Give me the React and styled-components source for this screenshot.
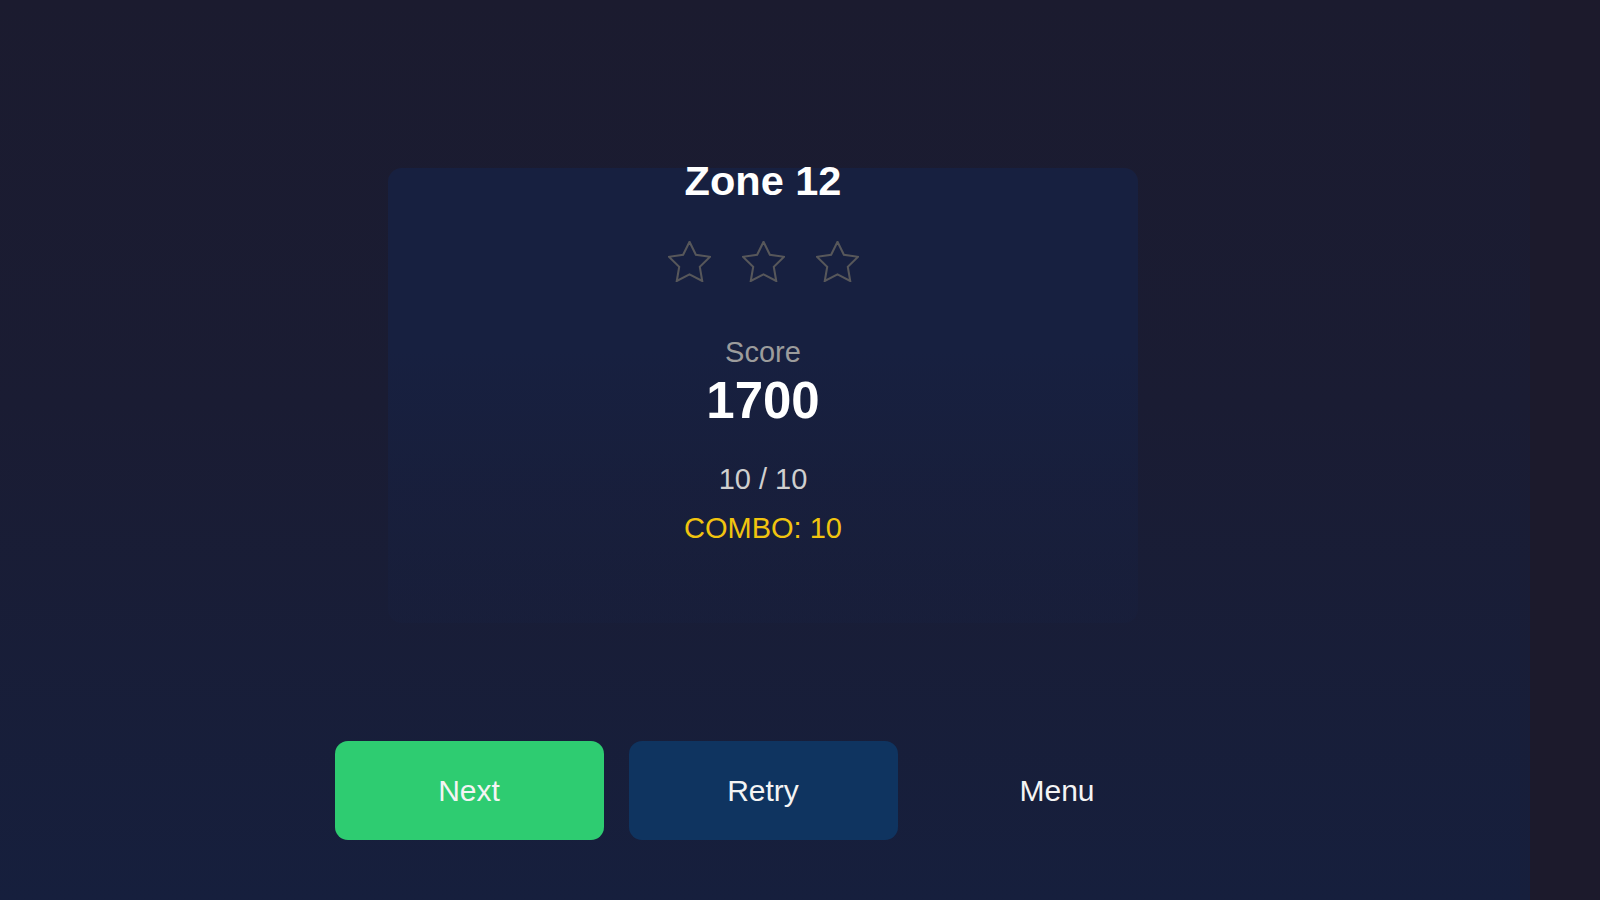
import React from "react";
import styled, { createGlobalStyle } from "styled-components";

const Global = createGlobalStyle`
  html, body { margin: 0; padding: 0; }
  body {
    background: #1c1a2c;
    font-family: "Liberation Sans", Arial, sans-serif;
    color: #f2f2f2;
  }
`;

const Shell = styled.div`
  display: flex;
  min-height: 900px;
`;

const Stage = styled.main`
  width: 1530px;
  box-sizing: border-box;
  padding-right: 4px;
  min-height: 900px;
  background: linear-gradient(180deg, #1b1b2f 0%, #1a1c33 45%, #161f3d 100%);
  display: flex;
  flex-direction: column;
  align-items: center;
`;

const Card = styled.section`
  margin-top: 168px;
  width: 750px;
  box-sizing: border-box;
  padding-bottom: 78px;
  border-radius: 14px;
  background: linear-gradient(180deg, #172040 0%, #172040 40%, rgba(23, 32, 64, 0.3) 100%);
  display: flex;
  flex-direction: column;
  align-items: center;
`;

const Title = styled.h1`
  margin: -12px 0 0;
  font-size: 41.5px;
  line-height: 1.2;
  font-weight: 700;
  color: #ffffff;
`;

const Stars = styled.div`
  margin-top: 35px;
  display: flex;
  gap: 31px;
  height: 41px;
`;

const Label = styled.div`
  margin-top: ${(p) => p.$mt}px;
  font-size: 29px;
  line-height: 1.2;
  color: ${(p) => p.$color};
`;

const ScoreValue = styled.div`
  font-size: 51px;
  line-height: 1.2;
  font-weight: 700;
  color: #ffffff;
`;

const Actions = styled.div`
  margin-top: 118px;
  display: flex;
  gap: 25px;
`;

const Button = styled.button`
  width: 269px;
  height: 99px;
  border: none;
  border-radius: 13px;
  font-family: "Liberation Sans", Arial, sans-serif;
  font-size: 30px;
  color: #f4f4f4;
  cursor: pointer;
  background: ${(p) =>
    p.$variant === "primary"
      ? "#2ecc71"
      : p.$variant === "secondary"
      ? "#0f3460"
      : "rgba(255,255,255,0.005)"};
`;

const Star = () => (
  <svg width="43" height="41" viewBox="1.6 1.6 20.8 19.9" fill="none">
    <polygon
      points="12,2 15.09,8.26 22,9.27 17,14.14 18.18,21.02 12,17.77 5.82,21.02 7,14.14 2,9.27 8.91,8.26"
      stroke="#57575a"
      strokeWidth="1"
      strokeLinejoin="miter"
    />
  </svg>
);

export default function App() {
  return (
    <>
      <Global />
      <Shell>
        <Stage>
          <Card>
            <Title>Zone 12</Title>
            <Stars>
              <Star />
              <Star />
              <Star />
            </Stars>
            <Label $mt={53} $color="#9c9c9c">Score</Label>
            <ScoreValue>1700</ScoreValue>
            <Label $mt={31} $color="#cfcfcf">10 / 10</Label>
            <Label $mt={14} $color="#f1c40f">COMBO: 10</Label>
          </Card>
          <Actions>
            <Button $variant="primary">Next</Button>
            <Button $variant="secondary">Retry</Button>
            <Button $variant="ghost">Menu</Button>
          </Actions>
        </Stage>
      </Shell>
    </>
  );
}
